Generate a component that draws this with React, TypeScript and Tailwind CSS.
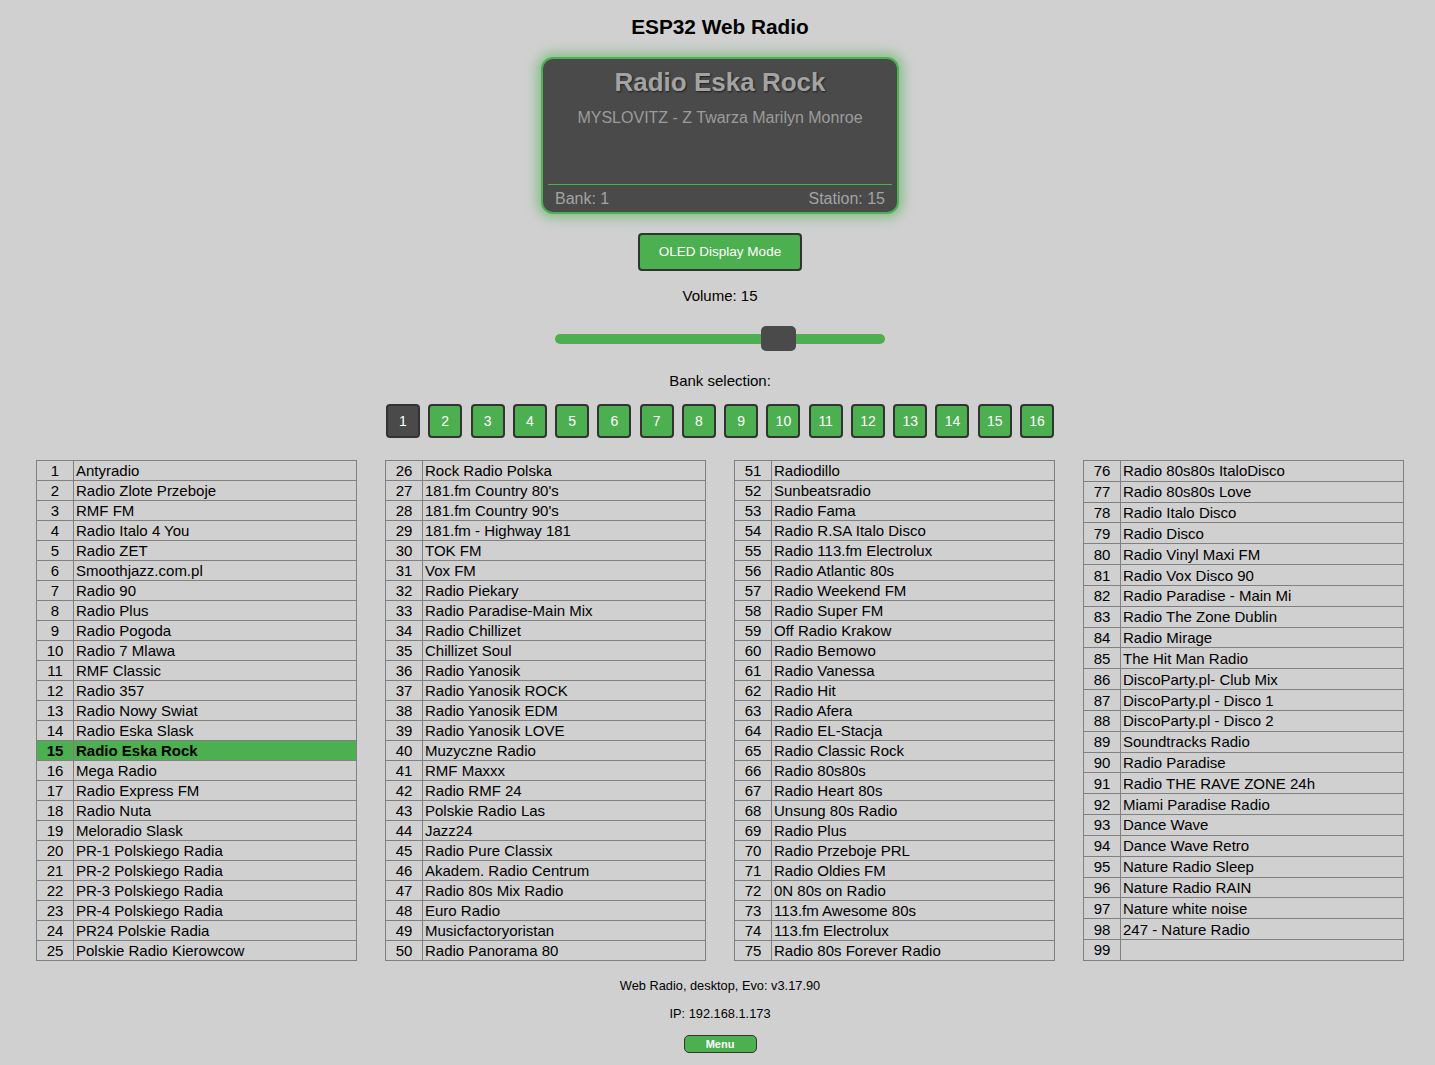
import React from "react";

const col1 = ["Antyradio","Radio Zlote Przeboje","RMF FM","Radio Italo 4 You","Radio ZET","Smoothjazz.com.pl","Radio 90","Radio Plus","Radio Pogoda","Radio 7 Mlawa","RMF Classic","Radio 357","Radio Nowy Swiat","Radio Eska Slask","Radio Eska Rock","Mega Radio","Radio Express FM","Radio Nuta","Meloradio Slask","PR-1 Polskiego Radia","PR-2 Polskiego Radia","PR-3 Polskiego Radia","PR-4 Polskiego Radia","PR24 Polskie Radia","Polskie Radio Kierowcow"];
const col2 = ["Rock Radio Polska","181.fm Country 80's","181.fm Country 90's","181.fm - Highway 181","TOK FM","Vox FM","Radio Piekary","Radio Paradise-Main Mix","Radio Chillizet","Chillizet Soul","Radio Yanosik","Radio Yanosik ROCK","Radio Yanosik EDM","Radio Yanosik LOVE","Muzyczne Radio","RMF Maxxx","Radio RMF 24","Polskie Radio Las","Jazz24","Radio Pure Classix","Akadem. Radio Centrum","Radio 80s Mix Radio","Euro Radio","Musicfactoryoristan","Radio Panorama 80"];
const col3 = ["Radiodillo","Sunbeatsradio","Radio Fama","Radio R.SA Italo Disco","Radio 113.fm Electrolux","Radio Atlantic 80s","Radio Weekend FM","Radio Super FM","Off Radio Krakow","Radio Bemowo","Radio Vanessa","Radio Hit","Radio Afera","Radio EL-Stacja","Radio Classic Rock","Radio 80s80s","Radio Heart 80s","Unsung 80s Radio","Radio Plus","Radio Przeboje PRL","Radio Oldies FM","0N 80s on Radio","113.fm Awesome 80s","113.fm Electrolux","Radio 80s Forever Radio"];
const col4 = ["Radio 80s80s ItaloDisco","Radio 80s80s Love","Radio Italo Disco","Radio Disco","Radio Vinyl Maxi FM","Radio Vox Disco 90","Radio Paradise - Main Mi","Radio The Zone Dublin","Radio Mirage","The Hit Man Radio","DiscoParty.pl- Club Mix","DiscoParty.pl - Disco 1","DiscoParty.pl - Disco 2","Soundtracks Radio","Radio Paradise","Radio THE RAVE ZONE 24h","Miami Paradise Radio","Dance Wave","Dance Wave Retro","Nature Radio Sleep","Nature Radio RAIN","Nature white noise","247 - Nature Radio",""];

function StationTable({ start, names }: { start: number; names: string[] }) {
  return (
    <div className="w-[321px] flex flex-col border-t border-l border-[#808080]">
      {names.map((n, i) => {
        const num = start + i;
        const active = num === 15;
        return (
          <div
            key={num}
            className={`flex flex-1 min-h-[20px] border-b border-[#808080] ${active ? "bg-[#4caf50] font-bold" : ""}`}
          >
            <div className="w-[37px] shrink-0 border-r border-[#808080] flex items-center justify-center leading-[17px]">
              {num}
            </div>
            <div className="flex-1 border-r border-[#808080] flex items-center pl-[2px] leading-[17px] whitespace-nowrap overflow-hidden">
              {n}
            </div>
          </div>
        );
      })}
    </div>
  );
}

export default function App() {
  const banks = Array.from({ length: 16 }, (_, i) => i + 1);
  return (
    <div
      className="min-h-[1065px] w-full bg-[#d0d0d0] text-black pl-[5px] overflow-hidden"
      style={{ fontFamily: '"Liberation Sans", Arial, sans-serif' }}
    >
      <div className="flex flex-col items-center">
        <h1 className="mt-[15px] text-[20.8px] leading-[24px] font-bold">ESP32 Web Radio</h1>

        <div className="mt-[18px] w-[358px] h-[157px] rounded-[12px] border-2 border-[#4caf50] bg-[#4a4a4a] shadow-[0_0_12px_4px_rgba(76,175,80,0.55)] flex flex-col">
          <div className="pt-[8px] text-center text-[26px] leading-[30px] font-bold text-[#a3a3a3] [text-shadow:1px_1px_2px_rgba(0,0,0,0.6)]">
            Radio Eska Rock
          </div>
          <div className="mt-[12px] text-center text-[16px] leading-[18px] text-[#9c9c9c]">
            MYSLOVITZ - Z Twarza Marilyn Monroe
          </div>
          <div className="flex-1" />
          <div className="mx-[5px] h-px bg-[#4caf50]" />
          <div className="h-[27px] flex items-center justify-between px-[12px] text-[16px] text-[#a3a3a3]">
            <span>Bank: 1</span>
            <span>Station: 15</span>
          </div>
        </div>

        <button className="mt-[19px] w-[164px] h-[38px] rounded-[4px] border-2 border-[#333] bg-[#4caf50] text-white text-[13.5px] cursor-pointer">
          OLED Display Mode
        </button>

        <div className="mt-[16px] text-[15px] leading-[18px]">Volume: 15</div>

        <div className="mt-[21px] relative w-[330px] h-[25px] flex items-center">
          <div className="w-full h-[10px] rounded-full bg-[#4caf50]" />
          <div className="absolute left-[206px] top-0 w-[35px] h-[25px] rounded-[5px] bg-[#4a4a4a]" />
        </div>

        <div className="mt-[21px] text-[15px] leading-[18px]">Bank selection:</div>

        <div className="mt-[14px] flex gap-[8.27px]">
          {banks.map((b) => (
            <div
              key={b}
              className={`w-[34px] h-[34px] rounded-[4px] border-2 border-[#333] flex items-center justify-center text-white text-[14px] ${b === 1 ? "bg-[#4a4a4a]" : "bg-[#4caf50]"}`}
            >
              {b}
            </div>
          ))}
        </div>

        <div className="mt-[22px] flex items-stretch gap-[28px] text-[15px]">
          <StationTable start={1} names={col1} />
          <StationTable start={26} names={col2} />
          <StationTable start={51} names={col3} />
          <StationTable start={76} names={col4} />
        </div>

        <div className="mt-[17px] text-[12.8px] leading-[15px]">Web Radio, desktop, Evo: v3.17.90</div>
        <div className="mt-[13px] text-[12.8px] leading-[15px]">IP: 192.168.1.173</div>
        <button className="mt-[14px] w-[73px] h-[18px] rounded-[5px] border-[1.5px] border-[#333] bg-[#4caf50] text-white text-[11px] font-bold leading-none">
          Menu
        </button>
      </div>
    </div>
  );
}
